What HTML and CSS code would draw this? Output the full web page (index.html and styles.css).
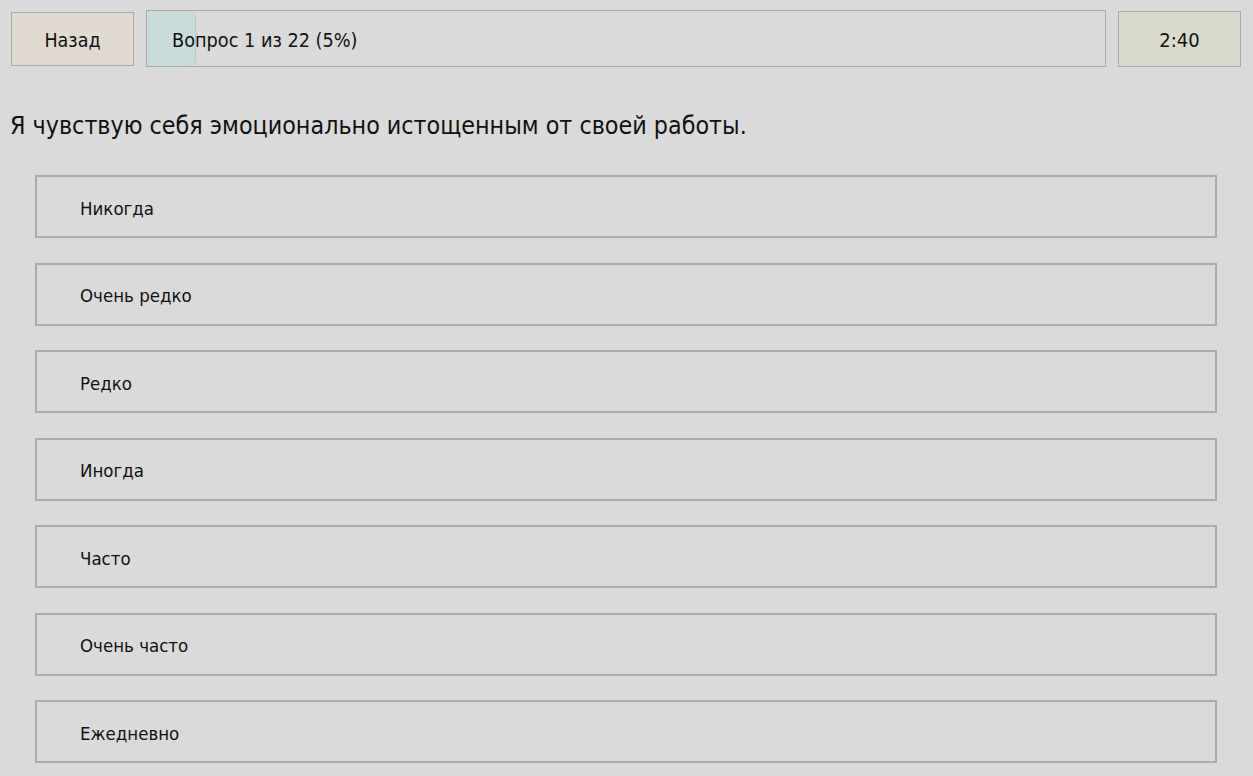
FILE: index.html
```html
<!DOCTYPE html>
<html lang="ru">
<head>
<meta charset="utf-8">
<title>Вопрос 1 из 22</title>
<link rel="stylesheet" href="styles.css">
</head>
<body>
<div class="top">
  <button class="back">Назад</button>
  <div class="progress">
    <div class="fill" style="width:48px"></div>
    <span class="ptext">Вопрос 1 из 22 (5%)</span>
  </div>
  <div class="timer">2:40</div>
</div>
<div class="question">Я чувствую себя эмоционально истощенным от своей работы.</div>
<div class="options">
  <div class="opt">Никогда</div>
  <div class="opt">Очень редко</div>
  <div class="opt">Редко</div>
  <div class="opt">Иногда</div>
  <div class="opt">Часто</div>
  <div class="opt">Очень часто</div>
  <div class="opt">Ежедневно</div>
</div>
</body>
</html>
```
FILE: styles.css
```css
html, body {
  margin: 0;
  padding: 0;
  background: #dadada;
  font-family: "DejaVu Sans Condensed", "DejaVu Sans", sans-serif;
  color: #111;
}
.top {
  display: flex;
  align-items: center;
  gap: 12px;
  padding: 10px 12px 0 11px;
  height: 57px;
}
.back {
  width: 123px;
  height: 54px;
  box-sizing: border-box;
  background: #e1dad1;
  border: 1px solid #aaa;
  font: inherit;
  font-size: 19.5px;
  color: #111;
  padding: 4px 0 0 0;
}
.progress {
  position: relative;
  flex: 1;
  height: 57px;
  box-sizing: border-box;
  border: 1px solid #aaa;
  display: flex;
  align-items: center;
  padding-top: 3px;
}
.fill {
  position: absolute;
  left: 0;
  top: 0;
  bottom: 0;
  background: #c8dcdc;
  border-right: 1px solid #b8c6c6;
  border-radius: 0 6px 6px 0;
}
.ptext {
  position: relative;
  margin-left: 25px;
  font-size: 19.7px;
}
.timer {
  width: 123px;
  height: 56px;
  box-sizing: border-box;
  background: #d9dacb;
  border: 1px solid #aaa;
  display: flex;
  align-items: center;
  justify-content: center;
  padding-top: 2px;
  font-size: 20px;
}
.question {
  font-size: 24.8px;
  margin: 44px 0 0 10px;
  line-height: 30px;
}
.options {
  margin: 34px 36px 0 35px;
  display: flex;
  flex-direction: column;
  gap: 24.5px;
}
.opt {
  height: 63px;
  box-sizing: border-box;
  border: 2px solid #ababab;
  display: flex;
  align-items: center;
  padding: 3px 0 0 43px;
  font-size: 18.5px;
}
```
